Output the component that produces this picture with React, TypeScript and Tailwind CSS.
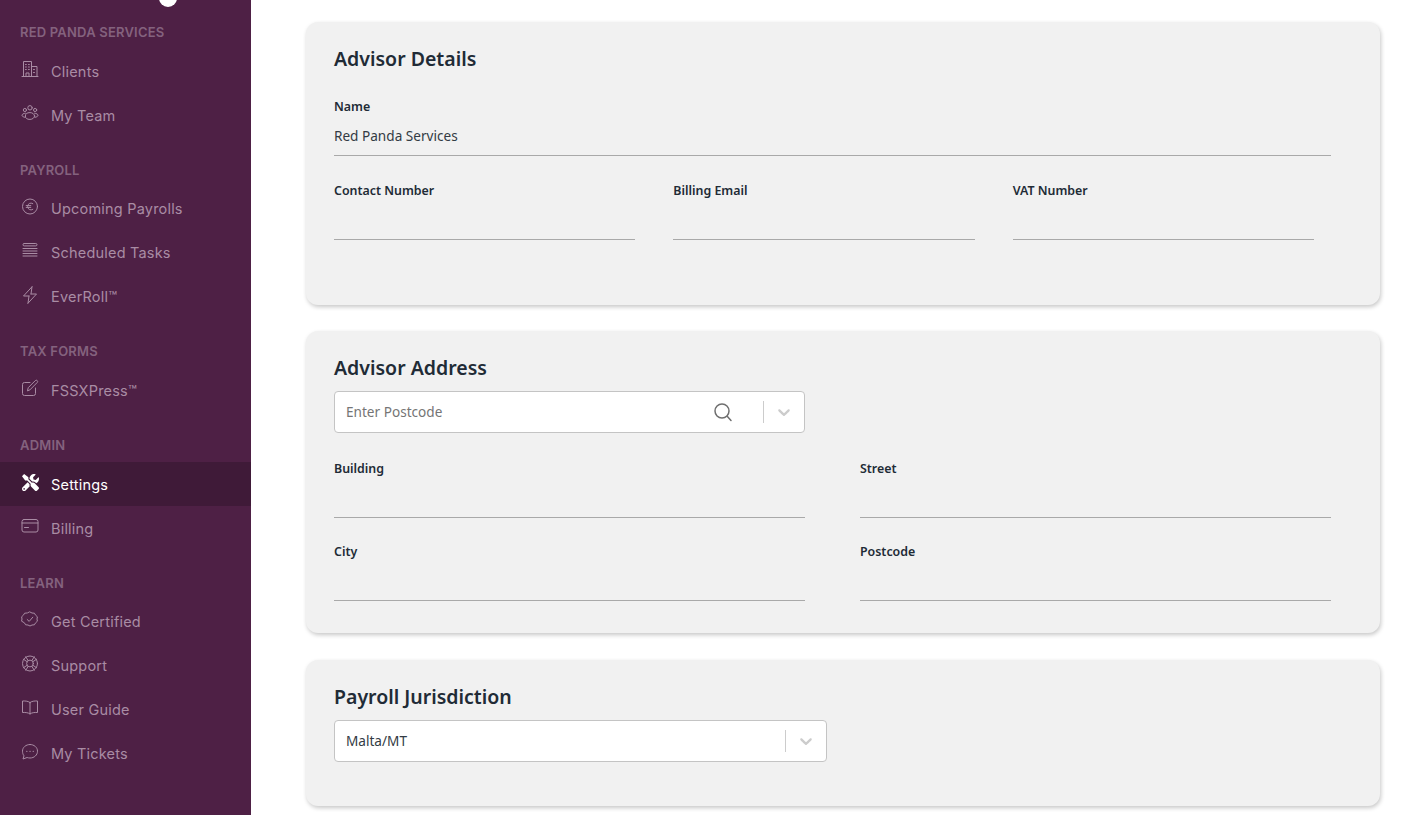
import type { ReactNode } from 'react';
import { FaTools } from 'react-icons/fa';

const icon = (children: ReactNode) => (
  <svg viewBox="0 0 18 18" fill="none" stroke="currentColor" strokeWidth="1" strokeLinecap="round" strokeLinejoin="round" className="h-[18px] w-[18px]">
    {children}
  </svg>
);

const ClientsIcon = icon(
  <>
    <path d="M1 16.5h16M2.500 16.500V1.500h8v15M10.500 6.500h5.500v10" />
    <path d="M4.500 4.500h.8M7.500 4.500h.8M4.500 7h.8M7.500 7h.8M4.500 9.500h.8M7.500 9.500h.8M12.500 9.500h1M12.500 12.500h1M5 16.500v-3.500h3v3.500" />
  </>,
);
const TeamIcon = icon(
  <>
    <circle cx="9" cy="3.800" r="2.200" />
    <circle cx="3.900" cy="6" r="1.600" />
    <circle cx="14.100" cy="6" r="1.600" />
    <ellipse cx="9" cy="12" rx="4.600" ry="3.400" />
    <path d="M4.400 9.200C2.400 9.400 1 10.300 1 11.300c0 1 1.200 1.800 3 2M13.600 9.200c2 .2 3.400 1.100 3.400 2.100 0 1-1.200 1.800-3 2" />
  </>,
);
const EuroIcon = icon(
  <>
    <circle cx="9" cy="8.500" r="7.500" />
    <path d="M11.800 5.600A3.400 3.400 0 0 0 6.600 8.500a3.400 3.400 0 0 0 5.200 2.900M5.200 7.600h4.600M5.200 9.400h4.600" />
  </>,
);
const TasksIcon = icon(
  <>
    <rect x="2" y="1.500" width="14" height="2.400" rx="1.200" />
    <path d="M2 6.500h14M2 9h14M2 11.500h14M2 14h14" />
  </>,
);
const BoltIcon = icon(<path d="M11 .8 2.500 10H8M7 17.200 15.500 8H10M11 .8 10 8M7 17.200 8 10" />);
const PenIcon = icon(
  <>
    <path d="M9 3.500H3.500a2 2 0 0 0-2 2v9a2 2 0 0 0 2 2h9a2 2 0 0 0 2-2V9" />
    <path d="M6.500 11.500 7.300 8.600 14.300 1.600a1.200 1.200 0 0 1 1.900 1.900L9.200 10.600Z" />
  </>,
);
const CardIcon = icon(
  <>
    <rect x="1" y="2.500" width="16" height="12.500" rx="2" />
    <path d="M1 6h16M3.500 10.500h4" />
  </>,
);
const CertifiedIcon = icon(
  <>
    <path d="M9 1l2 1 2.400.2 1.200 2 1.800 1.600-.4 2.200.4 2.200-1.800 1.600-1.200 2-2.400.2-2 1-2-1-2.400-.2-1.200-2L.6 10.200 1 8 .6 5.800l1.800-1.600 1.200-2L6 2Z" />
    <path d="M6.200 8.500 8.200 10.400 11.800 6.200" />
  </>,
);
const SupportIcon = icon(
  <>
    <circle cx="9" cy="8.500" r="7.500" />
    <circle cx="9" cy="8.500" r="3.400" />
    <path d="M4.700 1.800 7.200 5.600M13.300 1.800 10.800 5.600M4.700 15.200 7.200 11.400M13.300 15.200 10.800 11.400M2.300 4.200 6.100 6.700M15.700 4.200 11.900 6.700M2.300 12.800 6.100 10.300M15.700 12.800 11.900 10.300" />
  </>,
);
const BookIcon = icon(<path d="M9 3.500C7.500 2.200 4.500 1.800 1.500 2v11.500c3 -.2 6 .2 7.500 1.500 1.500-1.300 4.500-1.700 7.500-1.500V2C13.500 1.800 10.500 2.200 9 3.500ZM9 3.500V15" />);
const TicketsIcon = icon(
  <>
    <path d="M9 1.500c4.200 0 7.500 2.900 7.500 6.700S13.200 15 9 15c-1 0-2-.2-2.900-.5L2 16l1-3.200C2 11.600 1.500 10 1.500 8.200 1.500 4.400 4.800 1.500 9 1.500Z" />
    <path d="M5.800 8.300h.1M9 8.300h.1M12.200 8.300h.1" strokeWidth="1.300" />
  </>,
);

const NAV = [
  { label: 'RED PANDA SERVICES', items: [{ name: 'Clients', icon: ClientsIcon }, { name: 'My Team', icon: TeamIcon }] },
  {
    label: 'PAYROLL',
    items: [
      { name: 'Upcoming Payrolls', icon: EuroIcon },
      { name: 'Scheduled Tasks', icon: TasksIcon },
      { name: 'EverRoll™', icon: BoltIcon },
    ],
  },
  { label: 'TAX FORMS', items: [{ name: 'FSSXPress™', icon: PenIcon }] },
  {
    label: 'ADMIN',
    items: [
      { name: 'Settings', icon: <FaTools className="h-[17px] w-[17px]" />, active: true },
      { name: 'Billing', icon: CardIcon },
    ],
  },
  {
    label: 'LEARN',
    items: [
      { name: 'Get Certified', icon: CertifiedIcon },
      { name: 'Support', icon: SupportIcon },
      { name: 'User Guide', icon: BookIcon },
      { name: 'My Tickets', icon: TicketsIcon },
    ],
  },
];

function Sidebar() {
  return (
    <aside className="relative w-[251px] shrink-0 bg-[#4e2045] pt-[24.2px] font-['Inter',sans-serif]">
      <div className="absolute top-[-11px] left-[159px] h-[18px] w-[18px] rounded-full bg-white" />
      {NAV.map((section) => (
        <div key={section.label} className="mb-[25px]">
          <div className="mb-[8.6px] h-4 pl-5 text-[13px] leading-4 font-semibold tracking-[0.2px] text-[#84627e]">{section.label}</div>
          {section.items.map((item) => (
            <div
              key={item.name}
              className={
                item.active
                  ? 'flex h-11 items-center bg-[#3f1a38] pl-[21px] text-white'
                  : 'flex h-11 items-center pl-[21px] text-[#a98ca4]'
              }
            >
              <span className="-mt-[3px] mr-[12px] flex h-[18px] w-[18px] items-center justify-center">{item.icon}</span>
              <span className="mt-[2px] text-[14.5px] leading-5 tracking-[0.2px]">{item.name}</span>
            </div>
          ))}
        </div>
      ))}
    </aside>
  );
}

function Field({ label, value, className }: { label: string; value?: string; className?: string }) {
  return (
    <div className={className}>
      <div className="h-5 text-[12.4px] leading-[22px] font-semibold text-[#212b36]">{label}</div>
      <input
        readOnly
        defaultValue={value}
        className="block h-10 w-full border-b border-[#a9a9a9] bg-transparent text-[13.6px] text-[#333b44] outline-none"
      />
    </div>
  );
}

function Chevron() {
  return (
    <svg viewBox="0 0 20 20" className="h-5 w-5 fill-[#cccccc]">
      <path d="M4.516 7.548c.436-.446 1.043-.481 1.576 0L10 11.295l3.908-3.747c.533-.481 1.141-.446 1.574 0 .436.445.408 1.197 0 1.615-.406.418-4.695 4.502-4.695 4.502a1.095 1.095 0 0 1-1.576 0S4.924 9.581 4.516 9.163c-.409-.418-.436-1.170 0-1.615z" />
    </svg>
  );
}

function SelectBox({ text, placeholder, search, className }: { text?: string; placeholder?: string; search?: boolean; className: string }) {
  return (
    <div className={`flex h-[42px] items-center rounded-[4px] border border-[#c4c4c4] bg-white pl-[11px] ${className}`}>
      <input
        readOnly
        defaultValue={text}
        placeholder={placeholder}
        className="min-w-0 flex-1 bg-transparent text-[13.6px] text-[#333b44] outline-none placeholder:text-[#757575]"
      />
      {search && (
        <svg viewBox="0 0 20 20" fill="none" stroke="#6f6f6f" strokeWidth="1.5" strokeLinecap="round" className="mr-[30px] h-5 w-5">
          <circle cx="9" cy="9" r="7" />
          <path d="M14.200 14.200 18 18.500" />
        </svg>
      )}
      <span className="h-[22px] w-px bg-[#cccccc]" />
      <span className="flex w-[40px] justify-center">
        <Chevron />
      </span>
    </div>
  );
}

function Card({ title, className, children }: { title: string; className: string; children: ReactNode }) {
  return (
    <section className={`rounded-[12px] bg-[#f1f1f1] pt-[22px] pr-[49px] pl-[28px] shadow-[1px_2px_4px_rgba(0,0,0,0.22)] ${className}`}>
      <h2 className="h-[30px] text-[19.5px] leading-[30px] font-semibold text-[#212b36]">{title}</h2>
      {children}
    </section>
  );
}

export default function App() {
  return (
    <div className="flex h-[815px] overflow-hidden bg-white font-['Noto_Sans',sans-serif]">
      <Sidebar />
      <main className="flex-1 pt-[22px] pr-[23px] pl-[55px]">
        <Card title="Advisor Details" className="mb-[26px] h-[283px]">
          <Field label="Name" value="Red Panda Services" className="mt-[22px]" />
          <div className="mt-6 grid w-[980px] grid-cols-3 gap-[38px]">
            <Field label="Contact Number" />
            <Field label="Billing Email" />
            <Field label="VAT Number" />
          </div>
        </Card>
        <Card title="Advisor Address" className="mb-[27px] h-[302px]">
          <SelectBox placeholder="Enter Postcode" search className="mt-2 w-[471px]" />
          <div className="mt-[25px] grid grid-cols-2 gap-x-[55px] gap-y-[23px]">
            <Field label="Building" />
            <Field label="Street" />
            <Field label="City" />
            <Field label="Postcode" />
          </div>
        </Card>
        <Card title="Payroll Jurisdiction" className="h-[146px]">
          <SelectBox text="Malta/MT" className="mt-2 w-[493px]" />
        </Card>
      </main>
    </div>
  );
}
